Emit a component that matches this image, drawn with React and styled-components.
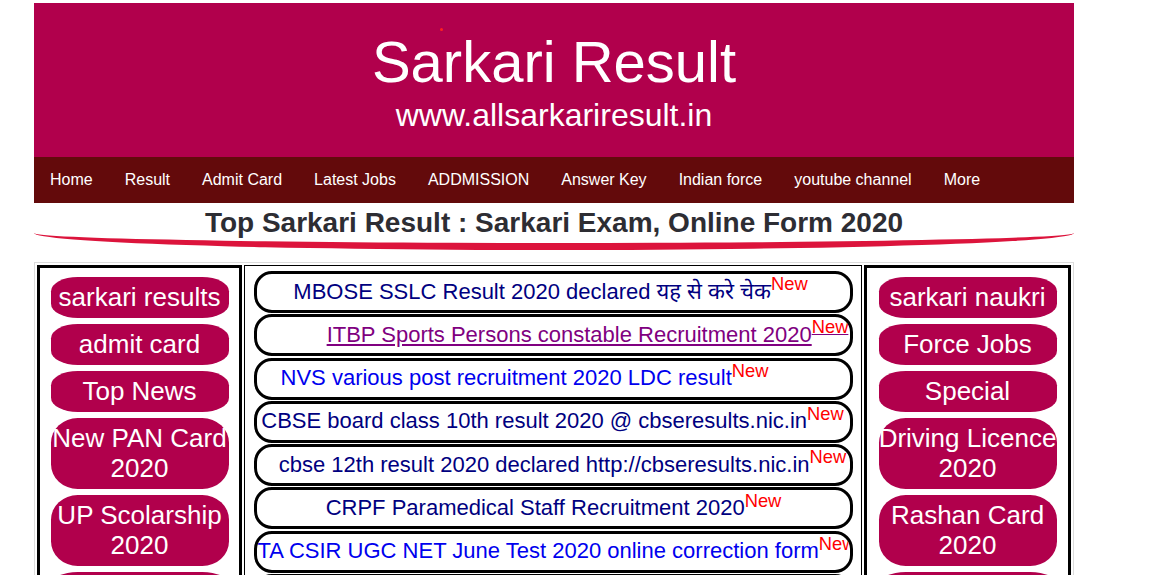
import React from "react";
import styled, { createGlobalStyle } from "styled-components";

const GlobalStyle = createGlobalStyle`
  body {
    margin: 0;
    background: #fff;
    font-family: "Liberation Sans", Arial, "Noto Sans", "Noto Sans Devanagari", sans-serif;
  }
`;

const Page = styled.div`
  width: 1040px;
  margin: 3px 0 0 34px;
`;

const Header = styled.header`
  position: relative;
  background: #b1004c;
  color: #fff;
  text-align: center;
  padding: 25px 0 23px;
`;

const Dot = styled.span`
  position: absolute;
  left: 406px;
  top: 25px;
  width: 3px;
  height: 3px;
  border-radius: 50%;
  background: #ff2020;
`;

const Title = styled.h1`
  margin: 0;
  font-size: 58px;
  font-weight: normal;
  line-height: 67px;
`;

const Url = styled.p`
  margin: 2px 0 0;
  font-size: 32px;
  line-height: 37px;
`;

const Nav = styled.nav`
  display: flex;
  background: #630a0b;
  height: 46px;
`;

const NavItem = styled.a`
  padding: 0 16px;
  color: #fff;
  font-size: 16px;
  line-height: 46px;
  text-decoration: none;
  white-space: nowrap;
`;

const Heading = styled.h2`
  margin: 0;
  padding-top: 5px;
  text-align: center;
  font-size: 28px;
  line-height: 29px;
  font-weight: bold;
  color: #2d2d33;
`;

const Swoosh = styled.div`
  margin-top: -4px;
  height: 10px;
  border-bottom: 7px solid #dc143c;
  border-radius: 0 0 50% 50% / 0 0 100% 100%;
`;

const Board = styled.div`
  display: grid;
  grid-template-columns: 205px 618px 207px;
  gap: 2px;
  align-items: start;
  margin-top: 12px;
  padding: 2px;
  border: 1px solid #dcdcdc;
  height: 320px;
  overflow: hidden;
`;

const SideCell = styled.div`
  border: 3px solid #000;
  padding: 9px 0 0;
  display: flex;
  flex-direction: column;
  align-items: center;
  gap: 6px;
  min-height: 400px;
`;

const SideButton = styled.a`
  width: 178px;
  box-sizing: border-box;
  padding: 5px 0 6px;
  background: #b1004c;
  color: #fff;
  font-size: 26px;
  line-height: 30px;
  text-align: center;
  text-decoration: none;
  border-radius: 15% / 35%;
`;

const NewsCell = styled.div`
  border: 1px solid #000;
  padding: 5px 8px 0 9px;
  min-height: 400px;
`;

const Pill = styled.div`
  box-sizing: border-box;
  height: 42px;
  margin-bottom: 1.3px;
  border: 3px solid #000;
  border-radius: 18px;
  display: flex;
  align-items: center;
  justify-content: center;
  overflow: hidden;
  white-space: nowrap;
  padding-left: ${(p) => (p.$shift > 0 ? p.$shift * 2 : 0)}px;
  padding-right: ${(p) => (p.$shift < 0 ? -p.$shift * 2 : 0)}px;
`;

const tones = {
  navy: "#000080",
  blue: "#0000ee",
  visited: "#800080",
};

const NewsLink = styled.a`
  font-size: 22px;
  line-height: 25px;
  margin-top: -2px;
  color: ${(p) => tones[p.$tone]};
  text-decoration: ${(p) => (p.$tone === "visited" ? "underline" : "none")};
`;

const NewTag = styled.sup`
  display: inline-block;
  color: #ff0000;
  line-height: 0;
  text-decoration: ${(p) => (p.$underline ? "underline" : "none")};
  text-decoration-color: #800080;
`;

const navLinks = [
  "Home",
  "Result",
  "Admit Card",
  "Latest Jobs",
  "ADDMISSION",
  "Answer Key",
  "Indian force",
  "youtube channel",
  "More",
];

const leftLinks = [
  "sarkari results",
  "admit card",
  "Top News",
  "New PAN Card 2020",
  "UP Scolarship 2020",
  "Syllabus",
];

const rightLinks = [
  "sarkari naukri",
  "Force Jobs",
  "Special",
  "Driving Licence 2020",
  "Rashan Card 2020",
  "Admission",
];

const news = [
  { text: "MBOSE SSLC Result 2020 declared यह से करे चेक", tone: "navy", shift: -3 },
  { text: "ITBP Sports Persons constable Recruitment 2020", tone: "visited", shift: 34 },
  { text: "NVS various post recruitment 2020 LDC result", tone: "blue", shift: -29 },
  { text: "CBSE board class 10th result 2020 @ cbseresults.nic.in", tone: "navy", shift: -1 },
  { text: "cbse 12th result 2020 declared http://cbseresults.nic.in", tone: "navy", shift: 9 },
  { text: "CRPF Paramedical Staff Recruitment 2020", tone: "navy", shift: 0 },
  { text: "TA CSIR UGC NET June Test 2020 online correction form", tone: "blue", shift: 3 },
  { text: "UP Police Constable Recruitment 2020", tone: "navy", shift: 0 },
];

const App = () => {
  return (
    <Page>
      <GlobalStyle />
      <Header>
        <Dot />
        <Title>Sarkari Result</Title>
        <Url>www.allsarkariresult.in</Url>
      </Header>
      <Nav>
        {navLinks.map((item) => (
          <NavItem key={item} href="#">
            {item}
          </NavItem>
        ))}
      </Nav>
      <Heading>Top Sarkari Result : Sarkari Exam, Online Form 2020</Heading>
      <Swoosh />
      <Board>
        <SideCell>
          {leftLinks.map((item) => (
            <SideButton key={item} href="#">
              {item}
            </SideButton>
          ))}
        </SideCell>
        <NewsCell>
          {news.map((n) => (
            <Pill key={n.text} $shift={n.shift}>
              <NewsLink href="#" $tone={n.tone}>
                {n.text}
                <NewTag $underline={n.tone === "visited"}>New</NewTag>
              </NewsLink>
            </Pill>
          ))}
        </NewsCell>
        <SideCell>
          {rightLinks.map((item) => (
            <SideButton key={item} href="#">
              {item}
            </SideButton>
          ))}
        </SideCell>
      </Board>
    </Page>
  );
};

export default App;
